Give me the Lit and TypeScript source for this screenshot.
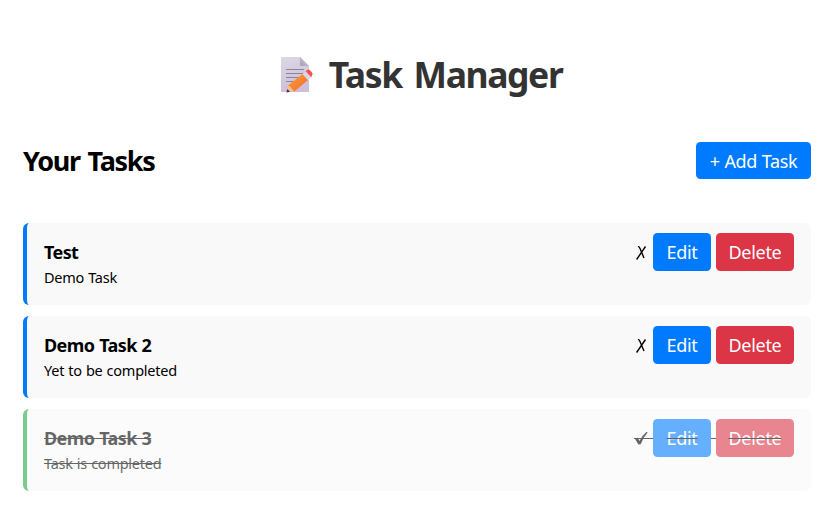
import { LitElement, html, css, svg } from "lit";
import { customElement, property } from "lit/decorators.js";
import { classMap } from "lit/directives/class-map.js";

interface Task {
  title: string;
  description: string;
  done: boolean;
}

const memoIcon = html`<svg class="memo" viewBox="0 0 36 40" width="36" height="40" aria-hidden="true">
  <defs>
    <linearGradient id="paper" x1="0" y1="0" x2="0.3" y2="1">
      <stop offset="0" stop-color="#dcd8e4" />
      <stop offset="1" stop-color="#cdbfda" />
    </linearGradient>
    <linearGradient id="fold" x1="0" y1="1" x2="1" y2="0">
      <stop offset="0" stop-color="#a79bb5" />
      <stop offset="1" stop-color="#d8d0e2" />
    </linearGradient>
    <linearGradient id="wood" x1="0" y1="0" x2="1" y2="1">
      <stop offset="0" stop-color="#ffa038" />
      <stop offset="1" stop-color="#f06a28" />
    </linearGradient>
  </defs>
  <path d="M2 2h18l9 9v26H2q-1 0-1-1V3q0-1 1-1z" fill="url(#paper)" />
  <path d="M20 2l9 9h-8q-1 0-1-1z" fill="url(#fold)" />
  <path d="M6 14.500h18M6 18.500h18M6 22.500h13M6 26.500h9" stroke="#8c8499" stroke-width="1.200" />
  <path d="M6.500 37.500l1.500-7.500 4.500 1.500 2.500 5z" fill="#eec0a0" />
  <path d="M6.500 37.500l.8-3.500 2.700 2.700z" fill="#493047" />
  <path d="M8 30.500L22.500 19l5.500 6-14 11.700q-.5-2.500-2-2.500-.5-2.500-4-3.700z" fill="url(#wood)" />
  <path d="M22.500 19l3.200-2.700 5.500 6-3.200 2.700z" fill="#ded6e8" />
  <path d="M25.700 16.300l1.500-1.300q1.500-1 3 .5l1.800 2q1.300 1.700 0 3L31.200 22.300z" fill="#f4524c" />
</svg>`;

const crossMark = svg`<path d="M4 4.700q1.200-.3 1.800 1.300l4.200 10M11.500 4.500L2.600 17.500" fill="none" stroke="currentColor" stroke-width="1.400" />`;
const checkMark = svg`<path d="M1.100 10.900l2.400-1.500 2 3.700Q8.500 7 12.600 3.700l1 .8Q9.500 9 6.700 16.200L4.400 16.500z" fill="currentColor" />`;

@customElement("task-card")
class TaskCard extends LitElement {
  @property({ attribute: false }) task!: Task;

  static styles = css`
    :host { display: block; }
    .card {
      box-sizing: border-box;
      height: 82px;
      display: flex;
      justify-content: space-between;
      align-items: flex-start;
      padding: 10px 17px 0 17px;
      border-left: 4.500px solid #007bff;
      border-radius: 6px;
      background: #f9f9f9;
      color: #000;
    }
    .card.done { border-left-color: #28a745; opacity: 0.6; }
    .copy { padding-top: 6px; }
    .title { font-size: 18px; line-height: 26px; font-weight: 700; letter-spacing: -0.600px; word-spacing: 0.800px; }
    .description { font-size: 14.500px; line-height: 25px; letter-spacing: -0.250px; word-spacing: 0.600px; }
    .actions { display: flex; align-items: center; }
    .mark { width: 19px; height: 20px; display: block; }
    .button {
      font: inherit;
      font-size: 18px;
      letter-spacing: -0.300px;
      height: 38px;
      border: 0;
      padding: 0;
      border-radius: 4.500px;
      color: #fff;
      background: #007bff;
      width: 58px;
    }
    .danger { width: 78px; background: #dc3545; }
    .space { width: 5px; height: 1px; }
    .done .copy span, .done .label {
      text-decoration: line-through 1px #000;
    }
    .done .space { background: #000; }
  `;

  render() {
    const { title, description, done } = this.task;
    return html`<div class=${classMap({ card: true, done })}>
      <div class="copy">
        <div class="title"><span>${title}</span></div>
        <div class="description"><span>${description}</span></div>
      </div>
      <div class="actions">
        <svg class="mark" viewBox="0 0 19 20" aria-hidden="true">
          ${done ? checkMark : crossMark}
          ${done ? svg`<path d="M0 10h19v1H0z" fill="currentColor" />` : ""}
        </svg>
        <button class="button"><span class="label">Edit</span></button>
        <span class="space"></span>
        <button class="button danger"><span class="label">Delete</span></button>
      </div>
    </div>`;
  }
}

@customElement("app-root")
class AppRoot extends LitElement {
  private tasks: Task[] = [
    { title: "Test", description: "Demo Task", done: false },
    { title: "Demo Task 2", description: "Yet to be completed", done: false },
    { title: "Demo Task 3", description: "Task is completed", done: true },
  ];

  static styles = css`
    :host {
      display: block;
      box-sizing: border-box;
      height: 520px;
      padding: 50px 17px 0 23px;
      background: #fff;
      color: #000;
      font-family: "Noto Sans", "Open Sans", sans-serif;
    }
    .heading {
      margin: 0;
      height: 50px;
      display: flex;
      justify-content: center;
      align-items: center;
      gap: 13px;
      padding-left: 8px;
      font-size: 35.500px;
      line-height: 48px;
      letter-spacing: -1.400px;
      word-spacing: 4px;
      color: #333;
    }
    .heading span { padding-bottom: 2px; }
    .toolbar {
      margin-top: 42px;
      height: 37px;
      display: flex;
      justify-content: space-between;
      align-items: center;
    }
    .subtitle { margin: 0; font-size: 27px; line-height: 37px; letter-spacing: -1.300px; word-spacing: 2px; }
    .add {
      width: 115px;
      height: 37px;
      padding: 0;
      border: 0;
      border-radius: 4.500px;
      background: #007bff;
      color: #fff;
      font: inherit;
      font-size: 18px;
      letter-spacing: -0.360px;
      word-spacing: 0.500px;
    }
    .list { margin-top: 44px; display: flex; flex-direction: column; gap: 11px; }
  `;

  render() {
    return html`
      <h1 class="heading">${memoIcon}<span>Task Manager</span></h1>
      <div class="toolbar">
        <h2 class="subtitle">Your Tasks</h2>
        <button class="add">+ Add Task</button>
      </div>
      <div class="list">
        ${this.tasks.map((task) => html`<task-card .task=${task}></task-card>`)}
      </div>
    `;
  }
}
